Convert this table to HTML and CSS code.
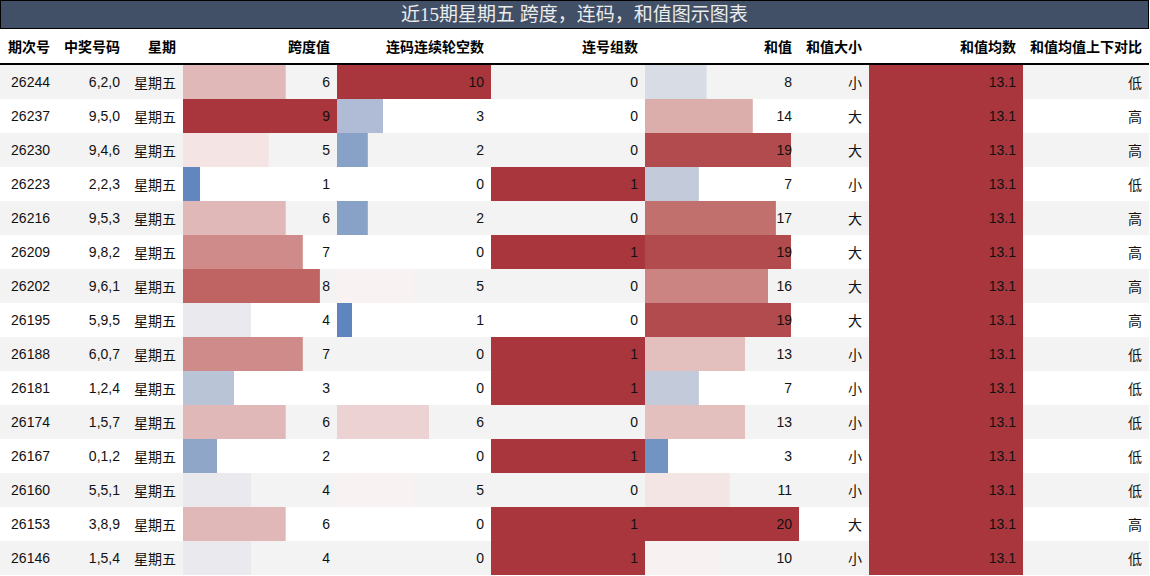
FILE: index.html
```html
<!DOCTYPE html>
<html lang="zh">
<head>
<meta charset="utf-8">
<title>近15期星期五 跨度，连码，和值图示图表</title>
<link rel="stylesheet" href="styles.css">
</head>
<body>
<div class="chart">
  <div class="title">近15期星期五 跨度，连码，和值图示图表</div>
  <table class="grid">
    <colgroup>
      <col class="c-id"><col class="c-num"><col class="c-week">
      <col class="c-bar"><col class="c-bar"><col class="c-bar"><col class="c-bar">
      <col class="c-size"><col class="c-bar"><col class="c-cmp">
    </colgroup>
    <thead>
      <tr>
        <th>期次号</th><th>中奖号码</th><th>星期</th><th>跨度值</th><th>连码连续轮空数</th><th>连号组数</th><th>和值</th><th>和值大小</th><th>和值均数</th><th>和值均值上下对比</th>
      </tr>
    </thead>
    <tbody>
      <tr><td>26244</td><td>6,2,0</td><td class="cjk">星期五</td>
        <td class="bar" style="--w:102.7px;--c:#e0b8b7">6</td>
        <td class="bar" style="--w:154px;--c:#a8363c">10</td>
        <td class="bar" style="--w:0px;--c:transparent">0</td>
        <td class="bar" style="--w:61.6px;--c:#d8dce5">8</td>
        <td class="cjk">小</td><td class="bar full">13.1</td><td class="cjk">低</td></tr>
      <tr><td>26237</td><td>9,5,0</td><td class="cjk">星期五</td>
        <td class="bar" style="--w:154px;--c:#a8363c">9</td>
        <td class="bar" style="--w:46.2px;--c:#b0bcd5">3</td>
        <td class="bar" style="--w:0px;--c:transparent">0</td>
        <td class="bar" style="--w:107.8px;--c:#dcaeab">14</td>
        <td class="cjk">大</td><td class="bar full">13.1</td><td class="cjk">高</td></tr>
      <tr><td>26230</td><td>9,4,6</td><td class="cjk">星期五</td>
        <td class="bar" style="--w:85.6px;--c:#f4e4e4">5</td>
        <td class="bar" style="--w:30.8px;--c:#88a1c6">2</td>
        <td class="bar" style="--w:0px;--c:transparent">0</td>
        <td class="bar" style="--w:146.3px;--c:#b24b4d">19</td>
        <td class="cjk">大</td><td class="bar full">13.1</td><td class="cjk">高</td></tr>
      <tr><td>26223</td><td>2,2,3</td><td class="cjk">星期五</td>
        <td class="bar" style="--w:17.1px;--c:#6287be">1</td>
        <td class="bar" style="--w:0px;--c:transparent">0</td>
        <td class="bar" style="--w:154px;--c:#a8363c">1</td>
        <td class="bar" style="--w:53.9px;--c:#c3cbda">7</td>
        <td class="cjk">小</td><td class="bar full">13.1</td><td class="cjk">低</td></tr>
      <tr><td>26216</td><td>9,5,3</td><td class="cjk">星期五</td>
        <td class="bar" style="--w:102.7px;--c:#e0b8b7">6</td>
        <td class="bar" style="--w:30.8px;--c:#88a1c6">2</td>
        <td class="bar" style="--w:0px;--c:transparent">0</td>
        <td class="bar" style="--w:130.9px;--c:#c2706e">17</td>
        <td class="cjk">大</td><td class="bar full">13.1</td><td class="cjk">高</td></tr>
      <tr><td>26209</td><td>9,8,2</td><td class="cjk">星期五</td>
        <td class="bar" style="--w:119.8px;--c:#cf8b8a">7</td>
        <td class="bar" style="--w:0px;--c:transparent">0</td>
        <td class="bar" style="--w:154px;--c:#a8363c">1</td>
        <td class="bar" style="--w:146.3px;--c:#b24b4d">19</td>
        <td class="cjk">大</td><td class="bar full">13.1</td><td class="cjk">高</td></tr>
      <tr><td>26202</td><td>9,6,1</td><td class="cjk">星期五</td>
        <td class="bar" style="--w:136.9px;--c:#bf6462">8</td>
        <td class="bar" style="--w:77px;--c:#f8f2f2">5</td>
        <td class="bar" style="--w:0px;--c:transparent">0</td>
        <td class="bar" style="--w:123.2px;--c:#cc8482">16</td>
        <td class="cjk">大</td><td class="bar full">13.1</td><td class="cjk">高</td></tr>
      <tr><td>26195</td><td>5,9,5</td><td class="cjk">星期五</td>
        <td class="bar" style="--w:68.4px;--c:#e9e9ee">4</td>
        <td class="bar" style="--w:15.4px;--c:#5e85bd">1</td>
        <td class="bar" style="--w:0px;--c:transparent">0</td>
        <td class="bar" style="--w:146.3px;--c:#b24b4d">19</td>
        <td class="cjk">大</td><td class="bar full">13.1</td><td class="cjk">高</td></tr>
      <tr><td>26188</td><td>6,0,7</td><td class="cjk">星期五</td>
        <td class="bar" style="--w:119.8px;--c:#cf8b8a">7</td>
        <td class="bar" style="--w:0px;--c:transparent">0</td>
        <td class="bar" style="--w:154px;--c:#a8363c">1</td>
        <td class="bar" style="--w:100.1px;--c:#e3bfbe">13</td>
        <td class="cjk">小</td><td class="bar full">13.1</td><td class="cjk">低</td></tr>
      <tr><td>26181</td><td>1,2,4</td><td class="cjk">星期五</td>
        <td class="bar" style="--w:51.3px;--c:#b9c4d6">3</td>
        <td class="bar" style="--w:0px;--c:transparent">0</td>
        <td class="bar" style="--w:154px;--c:#a8363c">1</td>
        <td class="bar" style="--w:53.9px;--c:#c3cbda">7</td>
        <td class="cjk">小</td><td class="bar full">13.1</td><td class="cjk">低</td></tr>
      <tr><td>26174</td><td>1,5,7</td><td class="cjk">星期五</td>
        <td class="bar" style="--w:102.7px;--c:#e0b8b7">6</td>
        <td class="bar" style="--w:92.4px;--c:#ecd2d3">6</td>
        <td class="bar" style="--w:0px;--c:transparent">0</td>
        <td class="bar" style="--w:100.1px;--c:#e3bfbe">13</td>
        <td class="cjk">小</td><td class="bar full">13.1</td><td class="cjk">低</td></tr>
      <tr><td>26167</td><td>0,1,2</td><td class="cjk">星期五</td>
        <td class="bar" style="--w:34.2px;--c:#8fa6c8">2</td>
        <td class="bar" style="--w:0px;--c:transparent">0</td>
        <td class="bar" style="--w:154px;--c:#a8363c">1</td>
        <td class="bar" style="--w:23.1px;--c:#7294c2">3</td>
        <td class="cjk">小</td><td class="bar full">13.1</td><td class="cjk">低</td></tr>
      <tr><td>26160</td><td>5,5,1</td><td class="cjk">星期五</td>
        <td class="bar" style="--w:68.4px;--c:#e9e9ee">4</td>
        <td class="bar" style="--w:77px;--c:#f8f2f2">5</td>
        <td class="bar" style="--w:0px;--c:transparent">0</td>
        <td class="bar" style="--w:84.7px;--c:#f4e5e5">11</td>
        <td class="cjk">小</td><td class="bar full">13.1</td><td class="cjk">低</td></tr>
      <tr><td>26153</td><td>3,8,9</td><td class="cjk">星期五</td>
        <td class="bar" style="--w:102.7px;--c:#e0b8b7">6</td>
        <td class="bar" style="--w:0px;--c:transparent">0</td>
        <td class="bar" style="--w:154px;--c:#a8363c">1</td>
        <td class="bar" style="--w:154px;--c:#a8363c">20</td>
        <td class="cjk">大</td><td class="bar full">13.1</td><td class="cjk">高</td></tr>
      <tr><td>26146</td><td>1,5,4</td><td class="cjk">星期五</td>
        <td class="bar" style="--w:68.4px;--c:#e9e9ee">4</td>
        <td class="bar" style="--w:0px;--c:transparent">0</td>
        <td class="bar" style="--w:154px;--c:#a8363c">1</td>
        <td class="bar" style="--w:77px;--c:#f8f1f1">10</td>
        <td class="cjk">小</td><td class="bar full">13.1</td><td class="cjk">低</td></tr>
    </tbody>
  </table>
</div>
</body>
</html>
```

FILE: styles.css
```css
html, body {
  margin: 0;
  padding: 0;
  background: #ffffff;
}

.chart {
  width: 1149px;
  font-family: "Liberation Sans", "Noto Sans CJK SC", sans-serif;
  color: #111;
}

.title {
  height: 27px;
  border: 1px solid #000;
  background: #415066;
  color: #ececec;
  font-family: "Liberation Serif", "Noto Sans CJK SC", serif;
  font-size: 19px;
  line-height: 27px;
  text-align: center;
  white-space: nowrap;
}

.grid {
  width: 1149px;
  table-layout: fixed;
  border-collapse: collapse;
  border-spacing: 0;
}

.c-id { width: 57px; }
.c-num { width: 70px; }
.c-week { width: 56px; }
.c-bar { width: 154px; }
.c-size { width: 70px; }
.c-cmp { width: 126px; }

.grid th {
  height: 34px;
  padding: 0 7px 0 0;
  font-family: "Noto Sans CJK SC", sans-serif;
  font-size: 14px;
  font-weight: 700;
  text-align: right;
  white-space: nowrap;
  border-bottom: 2px solid #000;
  color: #000;
}

.grid td {
  height: 34px;
  padding: 0 7px 0 0;
  font-size: 14px;
  text-align: right;
  white-space: nowrap;
  vertical-align: middle;
}

.grid tbody tr:nth-child(odd) { background: #f3f3f3; }
.grid tbody tr:nth-child(even) { background: #ffffff; }

.grid td.cjk {
  font-family: "Noto Sans CJK SC", sans-serif;
  font-size: 14px;
}

.grid td.bar {
  background: linear-gradient(var(--c), var(--c)) no-repeat left top / var(--w) 100%;
}

.grid td.bar.full {
  background: #a8363c;
}
```
